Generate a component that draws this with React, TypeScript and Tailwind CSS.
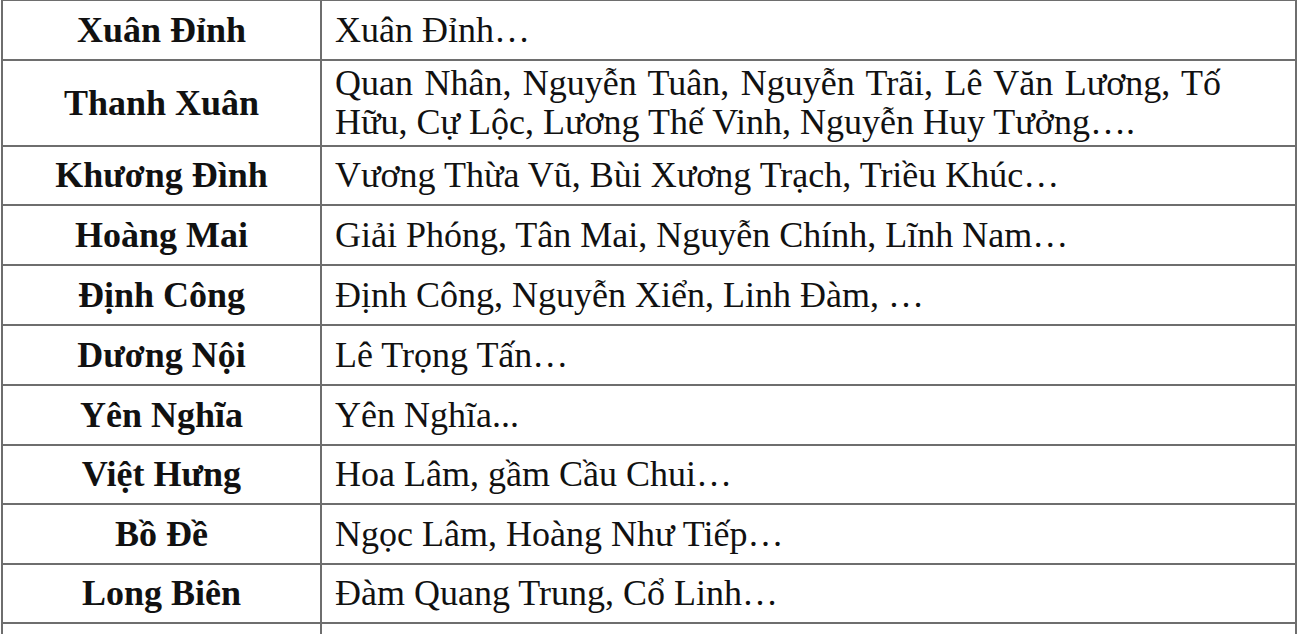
import React from 'react';

type Row = { name: string; streets: React.ReactNode; height: string };

const rows: Row[] = [
  { name: 'Xuân Đỉnh', streets: 'Xuân Đỉnh…', height: 'h-[60px]' },
  {
    name: 'Thanh Xuân',
    streets: (
      <>
        <div className="w-[886px] text-justify [text-align-last:justify]">
          Quan Nhân, Nguyễn Tuân, Nguyễn Trãi, Lê Văn Lương, Tố
        </div>
        <div>Hữu, Cự Lộc, Lương Thế Vinh, Nguyễn Huy Tưởng….</div>
      </>
    ),
    height: 'h-[86px]',
  },
  { name: 'Khương Đình', streets: 'Vương Thừa Vũ, Bùi Xương Trạch, Triều Khúc…', height: 'h-[59px]' },
  { name: 'Hoàng Mai', streets: 'Giải Phóng, Tân Mai, Nguyễn Chính, Lĩnh Nam…', height: 'h-[60px]' },
  { name: 'Định Công', streets: 'Định Công, Nguyễn Xiển, Linh Đàm, …', height: 'h-[60px]' },
  { name: 'Dương Nội', streets: 'Lê Trọng Tấn…', height: 'h-[60px]' },
  { name: 'Yên Nghĩa', streets: 'Yên Nghĩa...', height: 'h-[60px]' },
  { name: 'Việt Hưng', streets: 'Hoa Lâm, gầm Cầu Chui…', height: 'h-[59px]' },
  { name: 'Bồ Đề', streets: 'Ngọc Lâm, Hoàng Như Tiếp…', height: 'h-[60px]' },
  { name: 'Long Biên', streets: 'Đàm Quang Trung, Cổ Linh…', height: 'h-[59px]' },
];

export default function App() {
  return (
    <div
      className="w-[1300px] h-[634px] overflow-hidden bg-white text-[#111] text-[36px] leading-[39px]"
      style={{ fontFamily: '"Liberation Serif", "Times New Roman", serif' }}
    >
      <div className="ml-[1px] w-[1296px] border-t border-l-2 border-r-2 border-[#6e6e6e]">
        {rows.map((row) => (
          <div key={row.name} className={`flex border-b-2 border-[#6e6e6e] ${row.height}`}>
            <div className="w-[319px] shrink-0 border-r-2 border-[#6e6e6e] flex items-center justify-center font-bold">
              {row.name}
            </div>
            <div className="flex-1 flex items-center pl-[13px]">
              <div>{row.streets}</div>
            </div>
          </div>
        ))}
        <div className="flex h-[30px]">
          <div className="w-[319px] shrink-0 border-r-2 border-[#6e6e6e]" />
          <div className="flex-1" />
        </div>
      </div>
    </div>
  );
}
